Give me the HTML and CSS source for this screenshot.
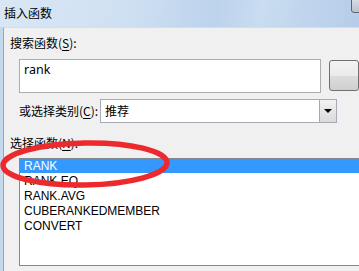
FILE: index.html
```html
<!DOCTYPE html>
<html lang="zh-CN">
<head>
  <meta charset="UTF-8">
  <title>插入函数</title>
  <link rel="stylesheet" href="styles.css">
</head>
<body>
  <div class="window">
    <!-- title bar -->
    <div class="titlebar">
      <span class="title">插入函数</span>
      <span class="close-btn"></span>
    </div>

    <div class="frame">
      <div class="content">
        <div class="label">搜索函数(<u>S</u>):</div>
        <div class="search-row">
          <div class="search-box">rank</div>
          <div class="go-btn"></div>
        </div>

        <div class="category-row">
          <span class="label">或选择类别(<u>C</u>):</span>
          <div class="select">
            <span class="select-text">推荐</span>
            <span class="select-arrow"></span>
          </div>
        </div>

        <div class="label">选择函数(<u>N</u>):</div>
        <ul class="func-list">
          <li class="selected">RANK</li>
          <li>RANK.EQ</li>
          <li>RANK.AVG</li>
          <li>CUBERANKEDMEMBER</li>
          <li>CONVERT</li>
        </ul>
      </div>
    </div>

    <!-- red annotation circle drawn over the dialog -->
    <svg class="mark" width="359" height="271" viewBox="0 0 359 271">
      <ellipse cx="85" cy="164" rx="82" ry="21" fill="none" stroke="#ec2a2e" stroke-width="5.5" transform="rotate(-1 85 164)"/>
    </svg>
  </div>
</body>
</html>
```

FILE: styles.css
```css
/* ------------------------------
   BASIC
------------------------------ */
* {
  box-sizing: border-box;
  margin: 0;
  padding: 0;
}

body {
  font-family: "Noto Sans", "Noto Sans CJK SC", sans-serif;
  font-size: 12px;
  color: #000;
  background: #f0f0f0;
}

.window {
  position: relative;
  width: 359px;
  height: 271px;
  overflow: hidden;
  background: #f0f0f0;
}

/* ------------------------------
   TITLE BAR
------------------------------ */
.titlebar {
  position: relative;
  height: 27px;
  padding-left: 4px;
  line-height: 26px;
  background: linear-gradient(100deg, #d9e7f5 0%, #cfe0f2 35%, #bcd3ec 60%, #c9dcf0 72%, #b5cde9 100%);
}

.title {
  font-family: "Noto Sans CJK SC", sans-serif;
}

.close-btn {
  position: absolute;
  top: -6px;
  right: -12px;
  width: 20px;
  height: 19px;
  border: 1px solid #5a6572;
  border-radius: 3px;
  background: linear-gradient(#e4e8ee, #b9c1cc);
}

/* ------------------------------
   DIALOG BODY
------------------------------ */
.frame {
  height: 244px;
  border-left: 3px solid #c6d8ec;
}

.content {
  height: 100%;
  border-left: 1px solid #9ba7b5;
  border-top: 1px solid #d6dde6;
  padding: 6px 0 0 6px;
}

.label {
  font-family: "Noto Sans CJK SC", sans-serif;
  line-height: 18px;
  height: 18px;
}

.label u {
  text-underline-offset: 2px;
}

/* search box */
.search-row {
  display: flex;
  margin: 7px 0 0 9px;
}

.search-box {
  width: 319px;
  height: 34px;
  border: 1px solid #abadb3;
  background: #fff;
  padding: 1px 0 0 4px;
  line-height: 18px;
  font-size: 12.5px;
}

.go-btn {
  width: 30px;
  height: 31px;
  margin: 1px 0 0 8px;
  border: 1px solid #707070;
  border-radius: 3px;
  background: linear-gradient(#f3f3f3 0%, #ebebeb 50%, #dddddd 51%, #cfcfcf 100%);
  flex-shrink: 0;
}

/* category select */
.category-row {
  display: flex;
  align-items: center;
  margin: 6px 0 0 9px;
  height: 24px;
}

.category-row .label {
  width: 81px;
}

.select {
  display: flex;
  width: 237px;
  height: 24px;
  border: 1px solid #a5acb5;
  background: #fff;
}

.select-text {
  flex: 1;
  padding-left: 4px;
  line-height: 21px;
  font-family: "Noto Sans CJK SC", sans-serif;
}

.select-arrow {
  position: relative;
  width: 17px;
  border-left: 1px solid #a8a8a8;
  background: linear-gradient(#f2f2f2, #d9d9d9);
}

.select-arrow::after {
  content: "";
  position: absolute;
  left: 4px;
  top: 9px;
  border-left: 4px solid transparent;
  border-right: 4px solid transparent;
  border-top: 4px solid #000;
}

/* function list */
.category-row + .label {
  margin-top: 11px;
}

.func-list {
  list-style: none;
  margin: 6px 0 0 9px;
  width: 360px;
  height: 108px;
  border: 1px solid #828790;
  background: #fff;
  font-family: "Liberation Sans", Arial, sans-serif;
}

.func-list li {
  height: 15px;
  line-height: 15px;
  padding-left: 4px;
  font-size: 12px;
}

.func-list li.selected {
  background: #3399ff;
  color: #fff;
  height: 14px;
  line-height: 14px;
  margin-bottom: 1px;
}

/* ------------------------------
   ANNOTATION
------------------------------ */
.mark {
  position: absolute;
  top: 0;
  left: 0;
  pointer-events: none;
}
```
